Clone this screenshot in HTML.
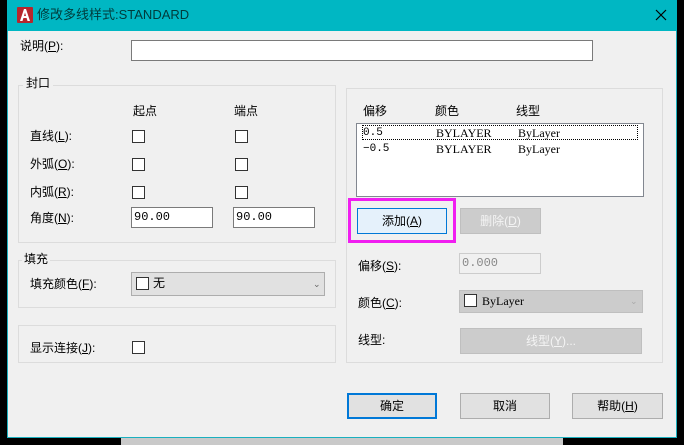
<!DOCTYPE html>
<html><head><meta charset="utf-8"><style>
*{margin:0;padding:0;box-sizing:border-box}
body{width:684px;height:445px;background:#000;position:relative;overflow:hidden;font-family:"Liberation Sans","Noto Sans CJK SC",sans-serif;font-size:12px;color:#000}
.a{position:absolute}
.t{position:absolute;line-height:14px;white-space:nowrap}
.frame{position:absolute;border:1px solid #dcdcdc}
.cb{position:absolute;width:13px;height:13px;border:1px solid #333;background:#fff}
.inp{position:absolute;background:#fff;border:1px solid #7a7a7a}
.btn{position:absolute;background:#e1e1e1;border:1px solid #adadad;text-align:center;font-size:12px}
.mono{font-family:"Liberation Mono","Noto Sans CJK SC",monospace}
.ser{font-family:"Liberation Serif",serif;font-size:12px}
u{text-decoration:underline}
</style></head><body>
<div class="a" style="left:121px;top:437px;width:442px;height:8px;background:#c9c9c9"></div>
<div class="a" style="left:7px;top:0;width:670px;height:438px;background:#f0f0f0;border:1px solid #1bb0bf;border-top:none"></div>
<div class="a" style="left:7px;top:0;width:670px;height:31px;background:#00b7c3"></div>
<svg class="a" style="left:17px;top:7px" width="16" height="16" viewBox="0 0 16 16"><rect width="16" height="16" fill="#b7262d" rx="1"/><path d="M3 14 L7 2 H9 L13 14 H10.5 L9.6 11 H6.4 L5.5 14Z M7 9 H9 L8 5.5Z" fill="#fff" fill-rule="evenodd"/></svg>
<div class="t" style="left:37px;top:8px;font-size:13px;color:#003b3b">修改多线样式:STANDARD</div>
<svg class="a" style="left:655px;top:9px" width="12" height="12"><path d="M1 1L11 11M11 1L1 11" stroke="#000" stroke-width="1.2"/></svg>

<div class="t" style="left:20px;top:39px">说明(<u>P</u>):</div>
<div class="inp" style="left:131px;top:40px;width:462px;height:21px"></div>

<div class="frame" style="left:18px;top:85px;width:318px;height:158px"></div>
<div class="t" style="left:23px;top:76px;background:#f0f0f0;padding:0 3px">封口</div>
<div class="t" style="left:133px;top:104px">起点</div>
<div class="t" style="left:234px;top:104px">端点</div>
<div class="t" style="left:30px;top:129px">直线(<u>L</u>):</div>
<div class="t" style="left:30px;top:157px">外弧(<u>O</u>):</div>
<div class="t" style="left:30px;top:185px">内弧(<u>R</u>):</div>
<div class="t" style="left:30px;top:211px">角度(<u>N</u>):</div>
<div class="cb" style="left:132px;top:130px"></div><div class="cb" style="left:235px;top:130px"></div>
<div class="cb" style="left:132px;top:158px"></div><div class="cb" style="left:235px;top:158px"></div>
<div class="cb" style="left:132px;top:186px"></div><div class="cb" style="left:235px;top:186px"></div>
<div class="inp mono" style="left:131px;top:207px;width:82px;height:21px;padding:2px 0 0 2px">90.00</div>
<div class="inp mono" style="left:233px;top:207px;width:82px;height:21px;padding:2px 0 0 2px">90.00</div>

<div class="frame" style="left:18px;top:260px;width:318px;height:48px"></div>
<div class="t" style="left:22px;top:252px;background:#f0f0f0;padding:0 2px">填充</div>
<div class="t" style="left:30px;top:277px">填充颜色(<u>F</u>):</div>
<div class="a" style="left:131px;top:272px;width:194px;height:24px;background:#e1e1e1;border:1px solid #adadad"></div>
<div class="cb" style="left:136px;top:277px"></div>
<div class="t" style="left:153px;top:276px">无</div>
<div class="t" style="left:313px;top:277px;font-size:9px;color:#666">⌄</div>

<div class="frame" style="left:18px;top:325px;width:318px;height:38px"></div>
<div class="t" style="left:30px;top:341px">显示连接(<u>J</u>):</div>
<div class="cb" style="left:132px;top:341px"></div>

<div class="frame" style="left:346px;top:88px;width:317px;height:275px"></div>
<div class="t" style="left:363px;top:104px">偏移</div>
<div class="t" style="left:435px;top:104px">颜色</div>
<div class="t" style="left:516px;top:104px">线型</div>
<div class="inp" style="left:356px;top:123px;width:288px;height:74px;border-color:#828790"></div>
<div class="a" style="left:362px;top:125px;width:276px;height:15px;border:1px dotted #000"></div>
<div class="t mono" style="left:363px;top:126px;font-size:11px">0.5</div>
<div class="t ser" style="left:436px;top:126px">BYLAYER</div>
<div class="t ser" style="left:518px;top:126px">ByLayer</div>
<div class="t mono" style="left:363px;top:142px;font-size:11px">−0.5</div>
<div class="t ser" style="left:436px;top:142px">BYLAYER</div>
<div class="t ser" style="left:518px;top:142px">ByLayer</div>

<div class="a" style="left:348px;top:198px;width:108px;height:45px;border:3px solid #f01ef0"></div>
<div class="btn" style="left:357px;top:208px;width:90px;height:26px;background:#e5f1fb;border-color:#0078d7;line-height:24px">添加(<u>A</u>)</div>
<div class="btn" style="left:460px;top:208px;width:81px;height:26px;background:#cccccc;border-color:#bfbfbf;color:#f4f4f4;line-height:24px">删除(<u>D</u>)</div>

<div class="t" style="left:358px;top:259px">偏移(<u>S</u>):</div>
<div class="a mono" style="left:459px;top:253px;width:82px;height:21px;border:1px solid #ccc;color:#888;padding:2px 0 0 2px">0.000</div>
<div class="t" style="left:358px;top:296px">颜色(<u>C</u>):</div>
<div class="a" style="left:459px;top:290px;width:184px;height:23px;background:#cccccc;border:1px solid #bfbfbf"></div>
<div class="cb" style="left:464px;top:294px"></div>
<div class="t ser" style="left:482px;top:294px">ByLayer</div>
<div class="t" style="left:630px;top:294px;font-size:9px;color:#aaa">⌄</div>
<div class="t" style="left:358px;top:333px">线型:</div>
<div class="btn" style="left:460px;top:328px;width:182px;height:26px;background:#cccccc;border-color:#bfbfbf;color:#f4f4f4;line-height:24px">线型(<u>Y</u>)...</div>

<div class="btn" style="left:347px;top:393px;width:90px;height:26px;border:2px solid #0078d7;line-height:22px">确定</div>
<div class="btn" style="left:460px;top:393px;width:90px;height:26px;line-height:24px">取消</div>
<div class="btn" style="left:572px;top:393px;width:91px;height:26px;line-height:24px">帮助(<u>H</u>)</div>
</body></html>
